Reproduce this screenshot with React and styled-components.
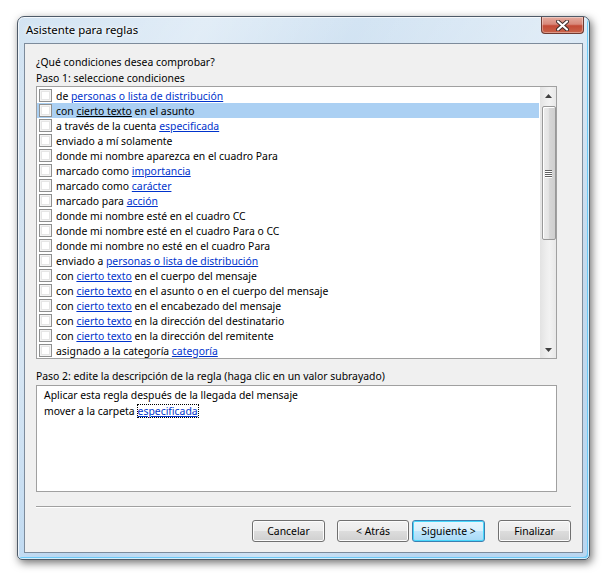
import React from "react";
import styled, { createGlobalStyle } from "styled-components";

const GlobalStyle = createGlobalStyle`
  html, body { margin: 0; padding: 0; background: #ffffff; }
  body { font-family: "Noto Sans", "Open Sans", sans-serif; font-size: 10.4px; color: #000; }
  * { box-sizing: border-box; }
`;

const Page = styled.div`
  width: 610px;
  height: 578px;
  padding: 16px 0 0 17px;
`;

const Window = styled.div`
  width: 573px;
  height: 544px;
  border-radius: 7px 7px 5px 5px;
  border: 1px solid #4e5a68;
  background:
    linear-gradient(118deg, rgba(255,255,255,0.0) 0%, rgba(255,255,255,0.35) 22%, rgba(255,255,255,0.0) 40%, rgba(255,255,255,0.3) 62%, rgba(255,255,255,0) 80%),
    linear-gradient(to bottom, #d3e4f3 0%, #c4d9ec 50%, #b9d6f0 100%);
  box-shadow: 2px 3px 9px rgba(0,0,0,0.55), inset 0 0 0 1px rgba(255,255,255,0.7), inset -2px -2px 0 0 #6cc9f7;
  display: flex;
  flex-direction: column;
  padding: 0 6px 6px 6px;
`;

const TitleBar = styled.div`
  height: 26px;
  flex: none;
  display: flex;
  align-items: flex-start;
  justify-content: space-between;
`;

const Title = styled.div`
  padding: 6px 0 0 2px;
  font-size: 11.4px;
  line-height: 14px;
  color: #000;
  text-shadow: 0 0 6px rgba(255,255,255,0.9), 0 0 3px rgba(255,255,255,0.9);
`;

const CloseButton = styled.div`
  width: 43px;
  height: 17px;
  margin-right: -1px;
  border: 1px solid #6e3a32;
  border-top: none;
  border-radius: 0 0 4px 4px;
  background: linear-gradient(to bottom, #e4ab9e 0%, #d8887a 45%, #c34a36 55%, #c9634a 100%);
  box-shadow: inset 0 0 0 1px rgba(255,255,255,0.35);
  display: flex;
  align-items: center;
  justify-content: center;
`;

const Client = styled.div`
  flex: 1;
  border: 1px solid #7d8b9b;
  background: #f0f0f0;
  display: flex;
  flex-direction: column;
  padding: 10px 11px 10px 11px;
`;

const Label = styled.div`
  height: 16px;
  line-height: 16px;
  white-space: nowrap;
`;

const ListBox = styled.div`
  width: 521px;
  height: 273px;
  border: 1px solid #a0a0a0;
  background: #fff;
  display: flex;
`;

const ListItems = styled.div`
  flex: 1;
  padding: 1px 1px 0 0;
`;

const Item = styled.div`
  height: 15px;
  display: flex;
  align-items: center;
  padding-left: 2px;
  background: ${(p) => (p.$selected ? "#abd0f3" : "transparent")};
  white-space: nowrap;
  line-height: 15px;
`;

const ItemText = styled.span`
  margin-top: 2px;
`;

const CheckBox = styled.span`
  width: 13px;
  height: 13px;
  flex: none;
  border: 1px solid #8e8f8f;
  background: #fff;
  box-shadow: inset 0 0 0 1px #f4f4f4, inset 0 0 0 2px #e6e6e6;
  margin-right: 4px;
`;

const Link = styled.span`
  color: ${(p) => (p.$dark ? "#000" : "#0033cc")};
  text-decoration: underline;
  text-underline-offset: 1px;
`;

const Scrollbar = styled.div`
  width: 16px;
  flex: none;
  background: linear-gradient(to right, #e3e3e3, #eeeeee 40%, #f2f2f2 60%, #e8e8e8);
  display: flex;
  flex-direction: column;
  align-items: center;
  padding-left: 1px;
`;

const Arrow = styled.div`
  height: 17px;
  width: 100%;
  display: flex;
  align-items: center;
  justify-content: center;
`;

const Track = styled.div`
  flex: 1;
`;

const Thumb = styled.div`
  width: 14px;
  height: 134px;
  margin-top: 2px;
  border: 1px solid #989898;
  border-radius: 2px;
  background: linear-gradient(to right, #ececec 0%, #e4e4e4 45%, #d6d6d6 55%, #cfcfcf 100%);
  box-shadow: inset 1px 1px 0 #fff;
  display: flex;
  align-items: center;
  justify-content: center;
`;

const Grip = styled.div`
  width: 7px;
  display: flex;
  flex-direction: column;
  gap: 1px;
  & > span {
    height: 1px;
    background: #606060;
    box-shadow: 0 1px 0 #fff;
  }
`;

const Step2Label = styled(Label)`
  margin-top: 9px;
`;

const DescBox = styled.div`
  width: 521px;
  height: 107px;
  margin-top: 1px;
  border: 1px solid #a0a0a0;
  background: #fff;
  padding: 1px 0 0 7px;
`;

const DescLine = styled.div`
  height: 16px;
  line-height: 16px;
  white-space: nowrap;
`;

const FocusLink = styled.span`
  color: #0033cc;
  text-decoration: underline;
  outline: 1px dotted #000;
  outline-offset: -1px;
  padding: 0 1px;
  margin-left: 2px;
`;

const Separator = styled.div`
  width: 535px;
  height: 2px;
  margin-top: 14px;
  border-top: 1px solid #a0a0a0;
  border-bottom: 1px solid #ffffff;
`;

const ButtonRow = styled.div`
  display: flex;
  justify-content: flex-end;
  width: 535px;
  margin-top: 12px;
`;

const Button = styled.div`
  width: ${(p) => p.$w || 73}px;
  height: 22px;
  margin-left: ${(p) => p.$gap || 0}px;
  border: 1px solid ${(p) => (p.$default ? "#3c7fb1" : "#707070")};
  border-radius: 3px;
  background: ${(p) =>
    p.$default
      ? "linear-gradient(to bottom, #eaf6fd 0%, #d9f0fc 50%, #bee6fd 50%, #a7d9f5 100%)"
      : "linear-gradient(to bottom, #f2f2f2 0%, #ebebeb 50%, #dddddd 50%, #cfcfcf 100%)"};
  box-shadow: inset 0 0 0 1px ${(p) => (p.$default ? "#48d7fb" : "#fcfcfc")};
  display: flex;
  align-items: center;
  justify-content: center;
  line-height: 14px;
`;

const conditions = [
  ["de ", ["personas o lista de distribución"]],
  ["con ", ["cierto texto"], " en el asunto"],
  ["a través de la cuenta ", ["especificada"]],
  ["enviado a mí solamente"],
  ["donde mi nombre aparezca en el cuadro Para"],
  ["marcado como ", ["importancia"]],
  ["marcado como ", ["carácter"]],
  ["marcado para ", ["acción"]],
  ["donde mi nombre esté en el cuadro CC"],
  ["donde mi nombre esté en el cuadro Para o CC"],
  ["donde mi nombre no esté en el cuadro Para"],
  ["enviado a ", ["personas o lista de distribución"]],
  ["con ", ["cierto texto"], " en el cuerpo del mensaje"],
  ["con ", ["cierto texto"], " en el asunto o en el cuerpo del mensaje"],
  ["con ", ["cierto texto"], " en el encabezado del mensaje"],
  ["con ", ["cierto texto"], " en la dirección del destinatario"],
  ["con ", ["cierto texto"], " en la dirección del remitente"],
  ["asignado a la categoría ", ["categoría"]],
];

function CloseX() {
  return (
    <svg width="13" height="11" viewBox="0 0 13 11">
      <path d="M2 1.5 L11 9.5 M11 1.5 L2 9.5" stroke="#3a2a28" strokeWidth="4" strokeLinecap="round" />
      <path d="M2 1.5 L11 9.5 M11 1.5 L2 9.5" stroke="#ffffff" strokeWidth="2.2" strokeLinecap="round" />
    </svg>
  );
}

function UpArrow() {
  return (
    <svg width="7" height="4" viewBox="0 0 7 4">
      <path d="M3.5 0 L7 4 L0 4 Z" fill="#404040" />
    </svg>
  );
}

function DownArrow() {
  return (
    <svg width="7" height="4" viewBox="0 0 7 4">
      <path d="M0 0 L7 0 L3.5 4 Z" fill="#404040" />
    </svg>
  );
}

export default function App() {
  return (
    <>
      <GlobalStyle />
      <Page>
        <Window>
          <TitleBar>
            <Title>Asistente para reglas</Title>
            <CloseButton>
              <CloseX />
            </CloseButton>
          </TitleBar>
          <Client>
            <Label>¿Qué condiciones desea comprobar?</Label>
            <Label>Paso 1: seleccione condiciones</Label>
            <ListBox>
              <ListItems>
                {conditions.map((parts, i) => (
                  <Item key={i} $selected={i === 1}>
                    <CheckBox />
                    <ItemText>
                      {parts.map((p, j) =>
                        Array.isArray(p) ? (
                          <Link key={j} $dark={i === 1}>
                            {p[0]}
                          </Link>
                        ) : (
                          <React.Fragment key={j}>{p}</React.Fragment>
                        )
                      )}
                    </ItemText>
                  </Item>
                ))}
              </ListItems>
              <Scrollbar>
                <Arrow>
                  <UpArrow />
                </Arrow>
                <Thumb>
                  <Grip>
                    <span />
                    <span />
                    <span />
                    <span />
                  </Grip>
                </Thumb>
                <Track />
                <Arrow>
                  <DownArrow />
                </Arrow>
              </Scrollbar>
            </ListBox>
            <Step2Label>Paso 2: edite la descripción de la regla (haga clic en un valor subrayado)</Step2Label>
            <DescBox>
              <DescLine>Aplicar esta regla después de la llegada del mensaje</DescLine>
              <DescLine>
                mover a la carpeta<FocusLink>especificada</FocusLink>
              </DescLine>
            </DescBox>
            <Separator />
            <ButtonRow>
              <Button>Cancelar</Button>
              <Button $w={72} $gap={12}>&lt; Atrás</Button>
              <Button $w={73} $gap={3} $default>Siguiente &gt;</Button>
              <Button $w={73} $gap={13}>Finalizar</Button>
            </ButtonRow>
          </Client>
        </Window>
      </Page>
    </>
  );
}
